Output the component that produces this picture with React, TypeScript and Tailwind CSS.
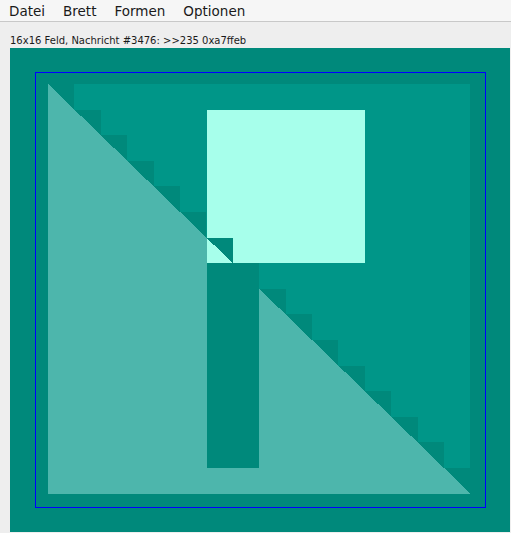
import React from 'react';

const menuItems = ['Datei', 'Brett', 'Formen', 'Optionen'];

// 16x16 board, cell size in px
const X0 = 38;
const Y0 = 36;
const CW = 26.4;
const CH = 25.6;

const cx = (c: number) => X0 + c * CW;
const cy = (r: number) => Y0 + r * CH;

const Board: React.FC = () => {
  const steps = Array.from({ length: 16 }, (_, r) => r);
  return (
    <svg width={500} height={484} viewBox="0 0 500 484" shapeRendering="crispEdges" className="block">
      <rect x={0} y={0} width={500} height={484} fill="#00897b" />
      {/* lighter field */}
      <rect x={cx(0)} y={cy(0)} width={16 * CW} height={15 * CH} fill="#009688" />
      {/* big triangle */}
      <polygon points={`${cx(0)},${cy(0)} ${cx(0)},${cy(16)} ${cx(16)},${cy(16)}`} fill="#4db6ac" />
      {/* light square */}
      <rect x={cx(6) + 0.5} y={cy(1)} width={6 * CW - 0.5} height={6 * CH} fill="#a7ffeb" />
      {/* stairs along the diagonal */}
      {steps.map((r) => (
        <polygon
          key={r}
          points={`${cx(r)},${cy(r)} ${cx(r + 1)},${cy(r)} ${cx(r + 1)},${cy(r + 1)}`}
          fill="#00897b"
        />
      ))}
      {/* dark column */}
      <rect x={cx(6) + 0.5} y={cy(7)} width={2 * CW - 0.5} height={8 * CH} fill="#00897b" />
      {/* frame */}
      <rect x={25.5} y={24.5} width={450} height={435} fill="none" stroke="#0000ff" strokeWidth={1} />
    </svg>
  );
};

const App: React.FC = () => {
  return (
    <div className="w-[511px] h-[533px] bg-[#eeeeee] overflow-hidden" style={{ fontFamily: '"DejaVu Sans", sans-serif' }}>
      <div className="h-[22px] bg-[#f6f6f6] border-b border-[#c8c8c8] flex pt-[1px]">
        {menuItems.map((item) => (
          <span key={item} className="px-[9px] text-[13.5px] leading-[20px] text-[#1a1a1a]">
            {item}
          </span>
        ))}
      </div>
      <div className="h-[26px] pl-[10px] pt-[13px] text-[10px] leading-[12px] text-[#1a1a1a]">
        16x16 Feld, Nachricht #3476: &gt;&gt;235 0xa7ffeb
      </div>
      <div className="ml-[10px]">
        <Board />
      </div>
    </div>
  );
};

export default App;
